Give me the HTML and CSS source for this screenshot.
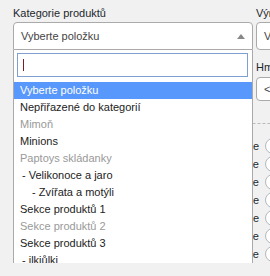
FILE: index.html
```html
<!DOCTYPE html>
<html lang="cs">
<head>
    <meta charset="UTF-8">
    <meta name="viewport" content="width=device-width, initial-scale=1.0">
    <title>Filtr produktů</title>
    <link rel="stylesheet" href="styles.css">
</head>
<body>
    <div class="page">
        <div class="top-row">
            <div class="field">
                <label class="field-label">Kategorie produktů</label>
                <div class="select-wrap">
                    <div class="select open">
                        <span class="select-text">Vyberte položku</span>
                        <span class="arrow"></span>
                    </div>
                    <div class="dropdown">
                        <div class="search">
                            <div class="search-input"><span class="caret"></span></div>
                        </div>
                        <ul class="results">
                            <li class="highlighted">Vyberte položku</li>
                            <li>Nepřiřazené do kategorií</li>
                            <li class="disabled">Mimoň</li>
                            <li>Minions</li>
                            <li class="disabled">Paptoys skládanky</li>
                            <li class="sub">- Velikonoce a jaro</li>
                            <li class="sub2">- Zvířata a motýli</li>
                            <li>Sekce produktů 1</li>
                            <li class="disabled">Sekce produktů 2</li>
                            <li>Sekce produktů 3</li>
                            <li class="sub">- jlkjůlkj</li>
                        </ul>
                    </div>
                </div>
            </div>
            <div class="field">
                <label class="field-label">Výrobce</label>
                <div class="select">
                    <span class="select-text">Vyberte položku</span>
                </div>
                <label class="field-label second">Hmotnost</label>
                <div class="select small">
                    <span class="select-text">&lt; 1 kg</span>
                </div>
            </div>
        </div>

        <div class="filters">
            <div class="filter-row"><span class="filter-label">Novinka: Ne</span><span class="radio"></span></div>
            <div class="filter-row"><span class="filter-label">Akce: Ne</span><span class="radio"></span></div>
            <div class="filter-row"><span class="filter-label">Doprava zdarma: Ne</span><span class="radio"></span></div>
            <div class="filter-row"><span class="filter-label">Doporučujeme: Ne</span><span class="radio"></span></div>
            <div class="filter-row"><span class="filter-label">Výprodej: Ne</span><span class="radio"></span></div>
            <div class="filter-row"><span class="filter-label">Skladem: Ne</span><span class="radio"></span></div>
            <div class="filter-row"><span class="filter-label">Dárek: Ne</span><span class="radio"></span></div>
        </div>
    </div>
</body>
</html>
```

FILE: styles.css
```css
* {
    margin: 0;
    padding: 0;
    box-sizing: border-box;
}

body {
    background-color: #f1f1f1;
    font-family: "Liberation Sans", Arial, sans-serif;
    font-size: 11px;
    color: #23282d;
    overflow: hidden;
}

.page {
    width: 480px;
    padding: 6px 0 0 13px;
}

.top-row {
    display: grid;
    grid-template-columns: 240px 200px;
    column-gap: 3px;
}

.field-label {
    display: block;
    height: 14px;
    line-height: 14px;
    margin-bottom: 2px;
    color: #23282d;
}

.field-label.second {
    margin-top: 10px;
    margin-bottom: 3px;
}

.select-wrap {
    position: relative;
}

.select {
    position: relative;
    height: 28px;
    background-color: white;
    border: 1px solid #aaa;
    border-radius: 4px;
}

.select.open {
    border-radius: 4px 4px 0 0;
}

.select.small {
    height: 24px;
}

.select-text {
    display: block;
    line-height: 26px;
    padding-left: 7px;
    color: #444;
    white-space: nowrap;
}

.select.small .select-text {
    line-height: 22px;
}

.arrow {
    position: absolute;
    right: 7px;
    top: 11px;
    width: 0;
    height: 0;
    border-style: solid;
    border-width: 0 4px 5px 4px;
    border-color: transparent transparent #888 transparent;
}

.dropdown {
    position: absolute;
    top: 28px;
    left: 0;
    width: 240px;
    background-color: white;
    border: 1px solid #aaa;
    border-top: none;
    border-radius: 0 0 4px 4px;
    z-index: 10;
}

.search {
    padding: 3px 4px 5px 3px;
}

.search-input {
    height: 24px;
    border: 1px solid #7f9fd3;
    padding: 5px 0 0 5px;
}

.caret {
    display: block;
    width: 1px;
    height: 12px;
    background-color: #7a1f1f;
}

.results {
    list-style: none;
    height: 188px;
    overflow: hidden;
}

.results li {
    height: 17px;
    line-height: 17px;
    padding-left: 6px;
    color: #222;
    white-space: nowrap;
}

.results li.highlighted {
    background-color: #5897fb;
    color: white;
}

.results li.disabled {
    color: #999;
}

.results li.sub {
    padding-left: 8px;
}

.results li.sub2 {
    padding-left: 18px;
}

.filters {
    margin-top: 22px;
    border-top: 1px dashed #bbb;
    padding-top: 13px;
}

.filter-row {
    display: flex;
    align-items: center;
    height: 18px;
}

.filter-label {
    width: 246px;
    text-align: right;
    white-space: nowrap;
}

.radio {
    width: 16px;
    height: 16px;
    margin-left: 6px;
    border: 1px solid #b4b9be;
    border-radius: 50%;
    background-color: #fff;
}
```
